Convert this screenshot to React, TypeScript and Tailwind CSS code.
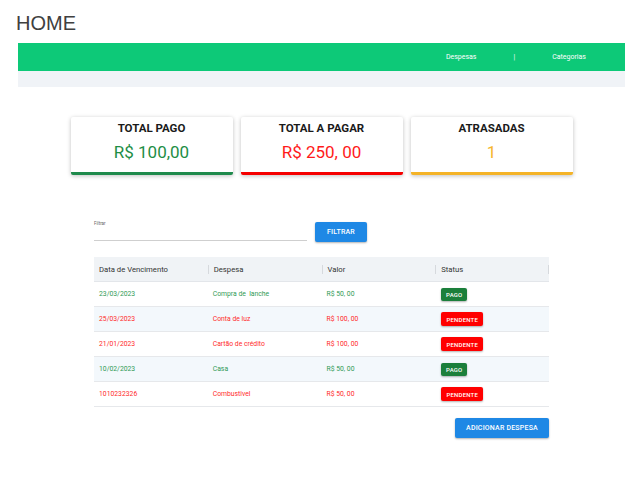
const despesas = [
  { data: "23/03/2023", nome: "Compra de  lanche", valor: "R$ 50, 00", pago: true },
  { data: "25/03/2023", nome: "Conta de luz", valor: "R$ 100, 00", pago: false },
  { data: "21/01/2023", nome: "Cartão de crédito", valor: "R$ 100, 00", pago: false },
  { data: "10/02/2023", nome: "Casa", valor: "R$ 50, 00", pago: true },
  { data: "1010232326", nome: "Combustivel", valor: "R$ 50, 00", pago: false },
];

const cards = [
  { titulo: "TOTAL PAGO", valor: "R$ 100,00", cor: "text-[#1e8e45]", borda: "border-[#1f8a4c]" },
  { titulo: "TOTAL A PAGAR", valor: "R$ 250, 00", cor: "text-[#ff1a1a]", borda: "border-[#f50000]" },
  { titulo: "ATRASADAS", valor: "1", cor: "text-[#f5b52a]", borda: "border-[#f4b327]" },
];

const Sep = () => <span className="w-px h-[9px] bg-[#d6d9dd] mr-[5px]" />;

const App = () => {
  return (
    <div className="min-h-screen bg-white font-['Roboto',sans-serif]">
      <h1 className="pl-[16px] pt-[11px] h-[43px] text-[20px] leading-[24px] text-[#404040] font-['Liberation_Sans',Arial,sans-serif]">
        HOME
      </h1>

      {/* Navbar */}
      <div className="mx-[18px]">
        <div className="h-[28px] bg-[#0dc978] flex items-center justify-end pr-[39px] text-white text-[7px]">
          <span>Despesas</span>
          <span className="mx-[37px]">|</span>
          <span>Categorias</span>
        </div>
        <div className="h-[16px] bg-[#f0f3f7]" />
      </div>

      {/* Cards */}
      <div className="flex justify-center gap-[8px] mt-[30px]">
        {cards.map((c) => (
          <div
            key={c.titulo}
            className={`w-[162px] h-[58px] bg-white border-b-[3px] ${c.borda} rounded-[2px] shadow-[0_1px_4px_rgba(0,0,0,0.25)] flex flex-col items-center pt-[4px]`}
          >
            <div className="text-[11.5px] font-bold text-[#1a1a1a] leading-[14px]">{c.titulo}</div>
            <div className={`text-[17px] leading-[22px] mt-[6px] ${c.cor}`}>{c.valor}</div>
          </div>
        ))}
      </div>

      {/* Filtro + tabela */}
      <div className="w-[455px] mx-auto mt-[45px]">
        <div className="flex items-end">
          <div className="w-[213px] border-b-[1.5px] border-[#cfcfcf] h-[21px]">
            <div className="text-[4.5px] text-[#666] pt-[1px]">Filtrar</div>
          </div>
          <button className="ml-[8px] w-[52px] h-[20px] bg-[#1e88e5] text-white text-[7px] font-medium tracking-[0.2px] rounded-[2px] shadow-[0_1px_2px_rgba(0,0,0,0.3)] mb-[-1px]">
            FILTRAR
          </button>
        </div>

        <div className="mt-[16px]">
          <div className="grid grid-cols-4 h-[25px] pt-[1px] bg-[#f0f3f6] text-[7.7px] text-[#333] items-center border-b border-[#e3e6ea]">
            <div className="pl-[5px] flex items-center">Data de Vencimento</div>
            <div className="flex items-center"><Sep />Despesa</div>
            <div className="flex items-center"><Sep />Valor</div>
            <div className="flex items-center justify-between">
              <span className="flex items-center"><Sep />Status</span>
              <span className="w-px h-[9px] bg-[#d6d9dd]" />
            </div>
          </div>
          {despesas.map((d, i) => {
            const cor = d.pago ? "text-[#2f9a55]" : "text-[#ff2a2a]";
            return (
              <div
                key={i}
                className={`grid grid-cols-4 h-[25px] items-center border-b border-[#e6e8eb] text-[6.8px] whitespace-pre ${cor} ${i % 2 === 1 ? "bg-[#f3f8fc]" : "bg-white"}`}
              >
                <div className="pl-[5px]">{d.data}</div>
                <div className="pl-[5px]">{d.nome}</div>
                <div className="pl-[5px]">{d.valor}</div>
                <div className="pl-[6px]">
                  {d.pago ? (
                    <span className="inline-flex items-center justify-center w-[26px] h-[13px] bg-[#1b7f3b] text-white text-[6px] font-medium tracking-[0.2px] rounded-[2px] shadow-[0_1px_2px_rgba(0,0,0,0.3)]">
                      PAGO
                    </span>
                  ) : (
                    <span className="inline-flex items-center justify-center w-[42px] h-[14px] bg-[#ff0000] text-white text-[6px] font-medium tracking-[0.2px] rounded-[2px] shadow-[0_1px_2px_rgba(0,0,0,0.3)]">
                      PENDENTE
                    </span>
                  )}
                </div>
              </div>
            );
          })}
        </div>

        <div className="flex justify-end mt-[11px]">
          <button className="w-[94px] h-[20px] bg-[#1e88e5] text-white text-[7px] font-medium tracking-[0.2px] rounded-[2px] shadow-[0_1px_2px_rgba(0,0,0,0.3)]">
            ADICIONAR DESPESA
          </button>
        </div>
      </div>
    </div>
  );
};

export default App;
